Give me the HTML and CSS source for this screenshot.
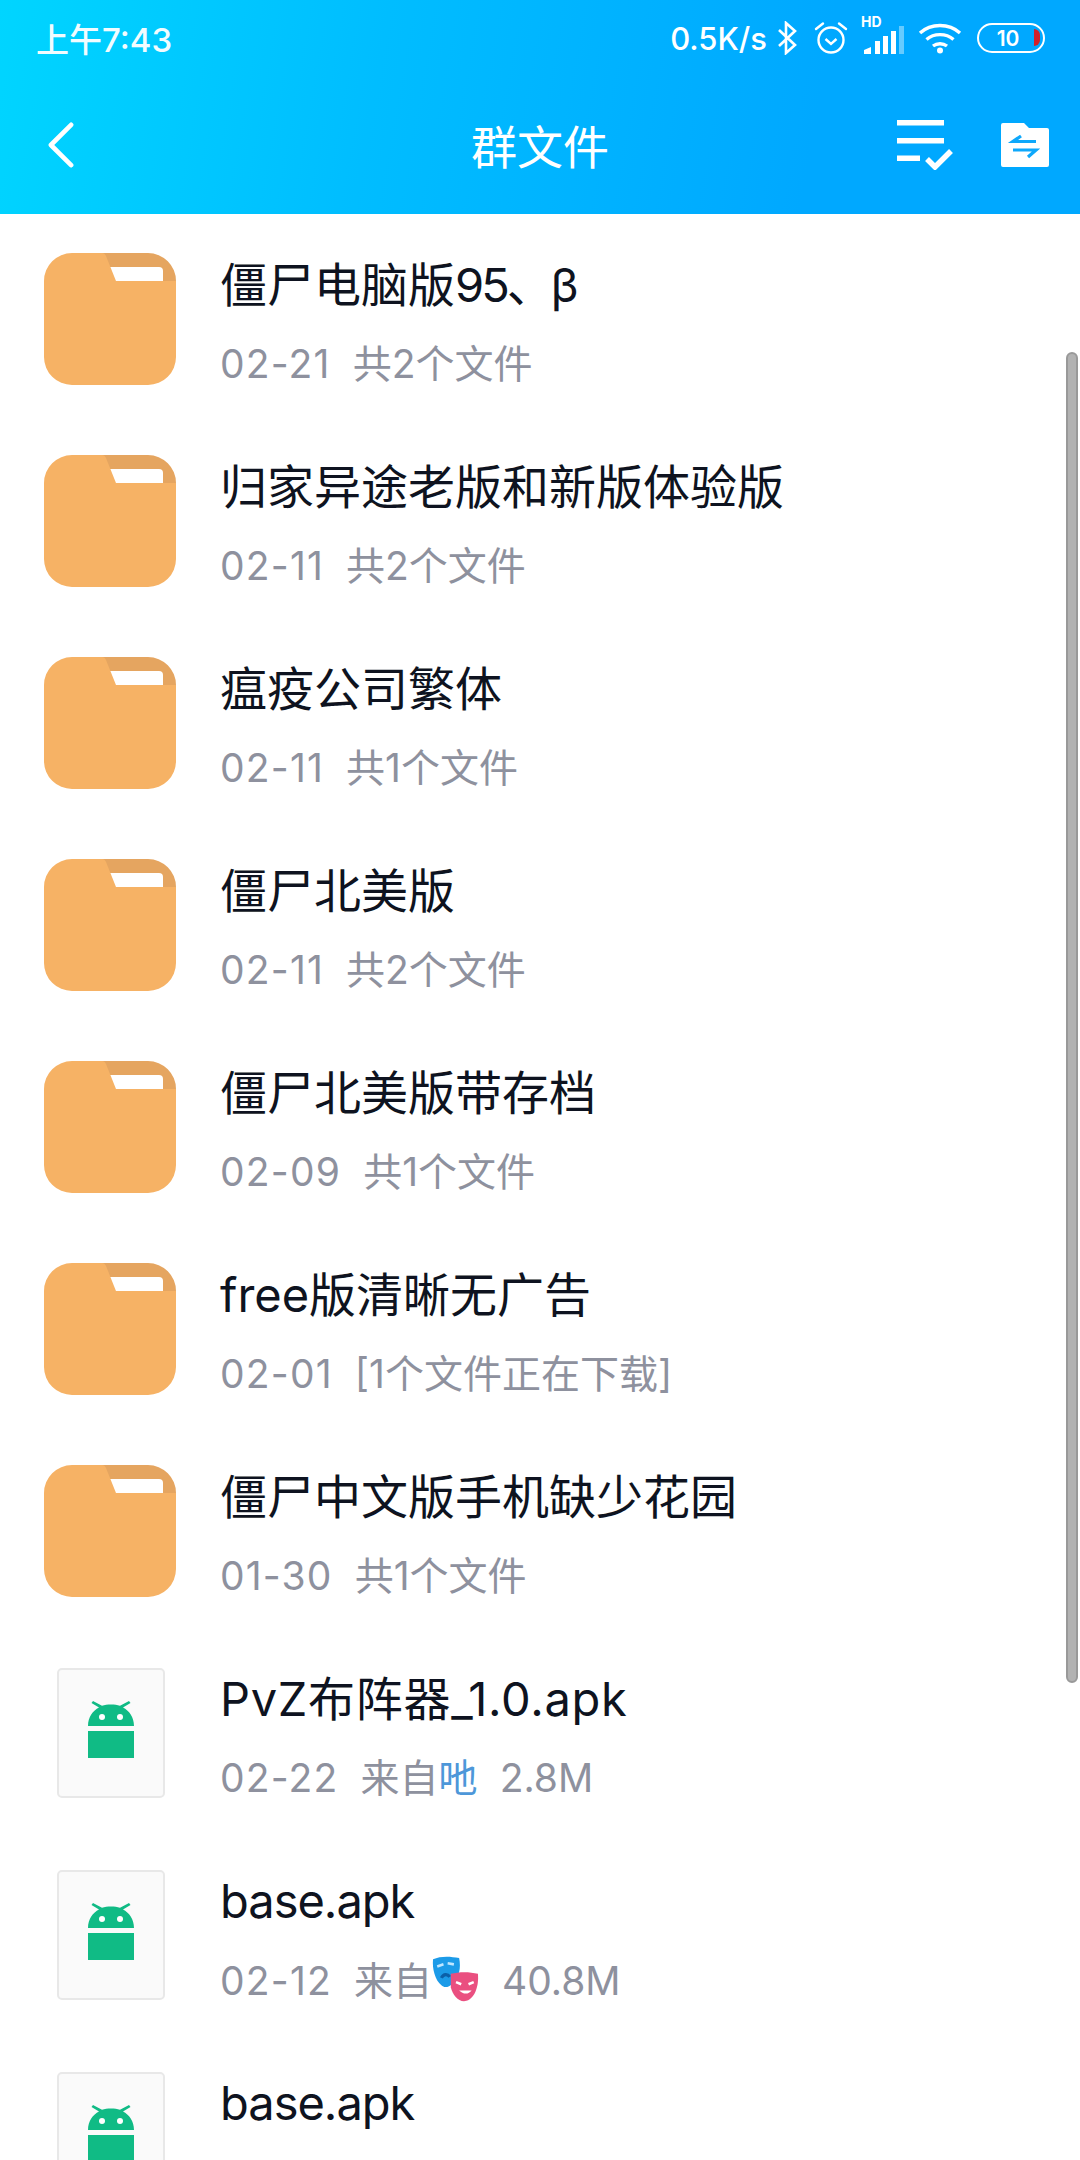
FILE: index.html
```html
<!DOCTYPE html>
<html lang="zh-CN">
<head>
<meta charset="utf-8">
<title>群文件</title>
<link rel="stylesheet" href="styles.css">
</head>
<body>
<svg class="defs" width="0" height="0" aria-hidden="true">
  <defs>
    <symbol id="folder" viewBox="0 0 132 132">
      <path d="M28 0H104a28 28 0 0 1 28 28V60H40V0Z" fill="#e5a560"/>
      <path d="M60 14H115a4 4 0 0 1 4 4V40H60Z" fill="#fff"/>
      <path d="M28 0H58C60 0 61 1 62 3L72 28H132V104a28 28 0 0 1-28 28H28a28 28 0 0 1-28-28V28A28 28 0 0 1 28 0Z" fill="#f6b265"/>
    </symbol>
    <symbol id="android" viewBox="0 0 46 58">
      <path d="M0 25C0 16 5 9.500 11 6.500L3.500 2 5 0 14 4.800C19 3 27 3 32 4.800L41 0 42.500 2 35 6.500C41 9.500 46 16 46 25Z" fill="#10bb85"/>
      <circle cx="14" cy="16" r="3" fill="#fff"/>
      <circle cx="32" cy="16" r="3" fill="#fff"/>
      <rect y="30" width="46" height="27" fill="#10bb85"/>
    </symbol>
  </defs>
</svg>
<div class="screen">
  <header class="top">
    <div class="status">
      <span class="clock">上午7:43</span>
      <div class="status-right">
        <span class="speed">0.5K/s</span>
        <svg class="i-bt" width="20" height="34" viewBox="0 0 20 34" fill="none" stroke="#fff" stroke-width="2.600"><path d="M2 9 18 24 9 32V2L18 10 2 25"/></svg>
        <svg class="i-alarm" width="34" height="34" viewBox="0 0 34 34" fill="none" stroke="#fff" stroke-width="2.400"><circle cx="17" cy="19" r="12.500"/><path d="M11.500 18 17 23 22.500 18"/><path d="M2 8 9 2.500M32 8 25 2.500" stroke-linecap="round"/></svg>
        <span class="signal">
          <span class="hd">HD</span>
          <svg width="42" height="28" viewBox="0 0 42 28"><path d="M2 28V24L9 21V28ZM13 28V15H18V28ZM21 28V10H26V28ZM29 28V5H34V28Z" fill="#fff"/><rect x="37" y="0" width="5" height="28" fill="#fff" opacity=".4"/></svg>
        </span>
        <svg class="i-wifi" width="44" height="32" viewBox="0 0 44 32" fill="none" stroke="#fff" stroke-width="3.400"><path d="M2 11C13 1 31 1 42 11M8.500 17.500C16 11 28 11 35.500 17.500M15 24C19 21 25 21 29 24"/><circle cx="22" cy="28.500" r="3" fill="#fff" stroke="none"/></svg>
        <span class="battery"><span class="batt-num">10</span><span class="batt-red"></span></span>
      </div>
    </div>
    <nav class="bar">
      <svg class="back" width="26" height="46" viewBox="0 0 28 50" fill="none" stroke="#fff" stroke-width="5" stroke-linecap="round" stroke-linejoin="round"><path d="M25 3 3 25 25 47"/></svg>
      <h1 class="title">群文件</h1>
      <div class="actions">
        <svg width="56" height="50" viewBox="0 0 56 50"><path d="M0 0H47V5.500H0ZM0 18H47V23.500H0ZM0 35.500H23V41H0Z" fill="#fff"/><path d="M30 39 38 47 54 31" fill="none" stroke="#fff" stroke-width="5.500"/></svg>
        <svg width="48" height="44" viewBox="0 0 48 44"><path d="M2 0H23L28 5H46a2 2 0 0 1 2 2V42a2 2 0 0 1-2 2H2a2 2 0 0 1-2-2V2A2 2 0 0 1 2 0Z" fill="#fff"/><path d="M35 18.500H12L20 13M12 27H35L27 34" fill="none" stroke="#0ea8fb" stroke-width="3.200"/></svg>
      </div>
    </nav>
  </header>
  <main class="list">
    <article class="row"><svg class="folder"><use href="#folder"/></svg><div class="text"><div class="name">僵尸电脑版<span class="tight">95、β</span></div><div class="meta"><span class="date">02-21</span><span>共2个文件</span></div></div></article>
    <article class="row"><svg class="folder"><use href="#folder"/></svg><div class="text"><div class="name">归家异途老版和新版体验版</div><div class="meta"><span class="date">02-11</span><span>共2个文件</span></div></div></article>
    <article class="row"><svg class="folder"><use href="#folder"/></svg><div class="text"><div class="name">瘟疫公司繁体</div><div class="meta"><span class="date">02-11</span><span>共1个文件</span></div></div></article>
    <article class="row"><svg class="folder"><use href="#folder"/></svg><div class="text"><div class="name">僵尸北美版</div><div class="meta"><span class="date">02-11</span><span>共2个文件</span></div></div></article>
    <article class="row"><svg class="folder"><use href="#folder"/></svg><div class="text"><div class="name">僵尸北美版带存档</div><div class="meta"><span class="date">02-09</span><span>共1个文件</span></div></div></article>
    <article class="row"><svg class="folder"><use href="#folder"/></svg><div class="text"><div class="name">free版清晰无广告</div><div class="meta"><span class="date">02-01</span><span>[1个文件正在下载]</span></div></div></article>
    <article class="row"><svg class="folder"><use href="#folder"/></svg><div class="text"><div class="name">僵尸中文版手机缺少花园</div><div class="meta"><span class="date">01-30</span><span>共1个文件</span></div></div></article>
    <article class="row"><div class="apk"><svg class="droid"><use href="#android"/></svg></div><div class="text"><div class="name wide">PvZ布阵器_1.0.apk</div><div class="meta"><span class="date">02-22</span><span>来自<b class="who">吔</b></span><span>2.8M</span></div></div></article>
    <article class="row"><div class="apk"><svg class="droid"><use href="#android"/></svg></div><div class="text"><div class="name narrow">base.apk</div><div class="meta"><span class="date">02-12</span><span class="from">来自<svg class="masks" width="48" height="48" viewBox="0 0 46 46"><path d="M1 3C8 0 17 0 26 2C28 12 26 20 20 26C16 30 12 31 9 28C3 23 0 12 1 3Z" fill="#1c9be8"/><path d="M5 10 11 8M15 7 21 8" stroke="#bfe6ff" stroke-width="2.500" fill="none"/><path d="M9 21C11 17 15 17 17 20" stroke="#0b5fa8" stroke-width="3" fill="none"/><path d="M18 17C26 15 36 15 44 17C45 27 42 40 33 43C26 45 20 38 18 30Z" fill="#ea4f80"/><path d="M23 25 28 27M40 25 35 27" stroke="#fff" stroke-width="2.500" fill="none"/><path d="M26 33C30 37 35 37 38 33Z" fill="#fff"/></svg></span><span>40.8M</span></div></div></article>
    <article class="row"><div class="apk"><svg class="droid"><use href="#android"/></svg></div><div class="text"><div class="name narrow">base.apk</div></div></article>
  </main>
  <div class="thumb"></div>
</div>
</body>
</html>
```
FILE: styles.css
```css
* { box-sizing: border-box; }
html, body { margin: 0; padding: 0; }
body { background: #fff; font-family: Inter, "Noto Sans CJK SC", sans-serif; }
.defs { position: absolute; }
.screen { position: relative; width: 1080px; height: 2160px; overflow: hidden; background: #fff; }
.top { height: 214px; background: linear-gradient(100deg, #00d5ff 0%, #00bdff 35%, #00a8ff 75%, #00a8ff 100%); color: #fff; }
.status { height: 76px; padding: 0 35px 0 36px; display: flex; align-items: center; justify-content: space-between; }
.clock { font-size: 33px; font-weight: 500; opacity: .95; }
.status-right { display: flex; align-items: center; }
.speed { font-size: 31px; font-weight: 500; margin-right: 10px; }
.i-alarm { margin-left: 17px; }
.signal { position: relative; display: block; width: 42px; height: 30px; margin-left: 14px; }
.signal svg { display: block; position: absolute; left: 0; bottom: -1px; }
.hd { position: absolute; left: -1px; top: -8px; font-size: 14px; font-weight: 700; line-height: 14px; }
.i-wifi { margin-left: 14px; }
.battery { position: relative; display: flex; align-items: center; justify-content: center; width: 68px; height: 30px; margin-left: 15px; border: 2.500px solid #fff; border-radius: 15px; padding-right: 6px; }
.batt-num { font-size: 21px; font-weight: 600; line-height: 1; }
.batt-red { position: absolute; right: 3px; top: 4px; width: 6px; height: 17px; background: #d0202a; border-radius: 0 6px 6px 0; }
.bar { position: relative; height: 138px; display: flex; align-items: center; justify-content: space-between; padding: 0 31px 0 48px; }
.title { position: absolute; left: 0; right: 0; top: 43px; margin: 0; text-align: center; font-size: 46px; font-weight: 400; line-height: 56px; }
.actions { display: flex; align-items: center; gap: 48px; }
.list { padding-top: 4px; }
.row { height: 202px; display: flex; align-items: center; padding-left: 44px; }
.folder { width: 132px; height: 132px; flex: none; margin-right: 44px; }
.apk { width: 108px; height: 130px; flex: none; margin: 0 55px 0 13px; background: #fafafa; border: 2px solid #e8e8e8; border-radius: 5px; display: flex; align-items: center; justify-content: center; padding-bottom: 6px; }
.droid { width: 46px; height: 58px; }
.text { display: flex; flex-direction: column; gap: 30px; height: 134px; padding-top: 6px; }
.name { font-size: 47px; line-height: 54px; color: #0e1320; white-space: nowrap; }
.tight { letter-spacing: -3px; }
.wide { letter-spacing: .7px; }
.narrow { letter-spacing: -1px; }
.meta { display: flex; align-items: center; gap: 22px; font-size: 39px; line-height: 44px; color: #8e919e; white-space: nowrap; }
.date { letter-spacing: 1.200px; }
.from { display: flex; align-items: center; }
.who { font-weight: 400; color: #4d97d9; }
.masks { margin: -2px 0 0 0; }
.thumb { position: absolute; right: 2px; top: 352px; width: 12px; height: 1331px; background: #aaa; border: 2px solid #8f8f8f; border-radius: 7px; opacity: .9; }
```
